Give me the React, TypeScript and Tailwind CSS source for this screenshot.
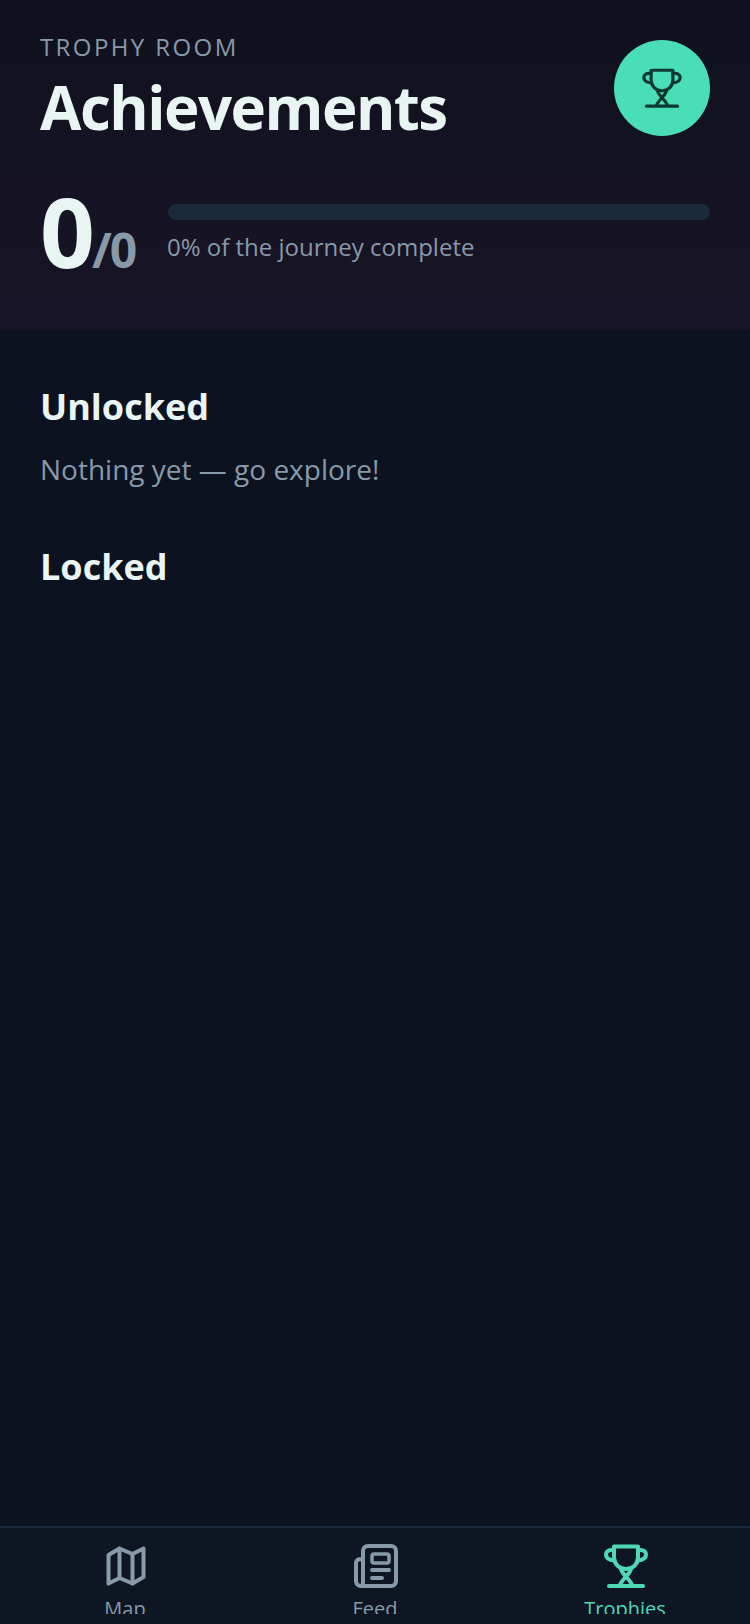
function TrophyIcon({ className, strokeWidth = 4 }: { className?: string; strokeWidth?: number }) {
  return (
    <svg viewBox="0 0 44 44" fill="none" stroke="currentColor" strokeWidth={strokeWidth} strokeLinecap="round" strokeLinejoin="round" className={className}>
      <path d="M10 2.500H34V13C34 20 29 25 22 25C15 25 10 20 10 13Z" />
      <path d="M10 6H7.500C3.500 6 2 8.500 2 10.500C2 13.500 4.500 16 10.500 16.500" />
      <path d="M34 6H36.500C40.500 6 42 8.500 42 10.500C42 13.500 39.500 16 33.500 16.500" />
      <path d="M17 25C18.500 31 26 35 28 41" />
      <path d="M27 25C25.500 31 18 35 16 41" />
      <path d="M5 42H39" />
    </svg>
  );
}

function MapIcon({ className }: { className?: string }) {
  return (
    <svg viewBox="0 0 40 40" fill="none" stroke="currentColor" strokeWidth={4} strokeLinecap="round" strokeLinejoin="round" className={className}>
      <path d="M2.500 9L13.500 2.500L26.500 8L37.500 2.500V31L26.500 37.500L13.500 32L2.500 37.500Z" />
      <path d="M13.500 2.500V32" />
      <path d="M26.500 8V37.500" />
    </svg>
  );
}

function FeedIcon({ className }: { className?: string }) {
  return (
    <svg viewBox="0 0 44 44" fill="none" stroke="currentColor" strokeWidth={4} strokeLinecap="round" strokeLinejoin="round" className={className}>
      <path d="M9 38V7C9 4 11 2 14 2H37C40 2 42 4 42 7V37C42 40 40 42 37 42H7C4 42 2 40 2 37V19C2 16.500 4 15 7 15H9" />
      <path d="M9 38C9 40.500 8 42 7 42" />
      <rect x="18" y="10" width="17" height="9" rx="2" strokeWidth={3.500} />
      <path d="M18 26H35" />
      <path d="M18 34H28" />
    </svg>
  );
}

function NavItem({ icon, label, active }: { icon: React.ReactNode; label: string; active?: boolean }) {
  return (
    <div className={`flex flex-col items-center w-[250px] ${active ? 'text-[#4fd8b4]' : 'text-[#8899aa]'}`}>
      <div className="h-[44px] flex items-center ml-[2px]">{icon}</div>
      <span className="text-[20px] leading-[30px] h-[20px] mt-[6px] overflow-hidden">{label}</span>
    </div>
  );
}

export default function App() {
  return (
    <div className="h-[1624px] w-[750px] flex flex-col overflow-hidden bg-[#0c1220] font-['Open_Sans',sans-serif]">
      <header className="h-[330px] shrink-0 px-10 pt-[30px] bg-gradient-to-b from-[#0f111e] to-[#181427]">
        <div className="flex justify-between items-start">
          <div>
            <p className="text-[24px] leading-[34px] tracking-[2.4px] text-[#8899aa]">TROPHY ROOM</p>
            <h1 className="text-[60px] leading-[74px] mt-[6px] font-bold tracking-[-1.5px] text-[#e8f5f2]">Achievements</h1>
          </div>
          <div className="w-24 h-24 mt-[10px] rounded-full bg-[#4adeb6] flex items-center justify-center">
            <TrophyIcon className="w-10 h-10 text-[#0d3a30]" strokeWidth={3.500} />
          </div>
        </div>
        <div className="flex items-start mt-[31px]">
          <div className="w-[128px] flex items-baseline">
            <span className="text-[96px] leading-[112px] font-bold tracking-[-3px] text-[#e8f5f2]">0</span>
            <span className="text-[48px] leading-[56px] font-bold tracking-[-2px] text-[#8899aa]">/0</span>
          </div>
          <div className="flex-1 pt-[29px]">
            <div className="h-4 rounded-lg bg-[#1a2a3c]" />
            <p className="text-[24px] leading-[34px] mt-[10px] -ml-px text-[#8899aa]">0% of the journey complete</p>
          </div>
        </div>
      </header>
      <main className="flex-1 px-10 pt-[52px]">
        <h2 className="text-[36px] leading-[50px] font-bold text-[#e8f5f2]">Unlocked</h2>
        <p className="text-[28px] leading-[40px] mt-[17px] text-[#8899aa]">Nothing yet — go explore!</p>
        <h2 className="text-[36px] leading-[50px] font-bold text-[#e8f5f2] mt-[53px]">Locked</h2>
      </main>
      <nav className="h-[98px] shrink-0 border-t-2 border-[#1a2a3c] bg-[#0f1623] flex pt-4">
        <NavItem icon={<MapIcon className="w-10 h-10" />} label="Map" />
        <NavItem icon={<FeedIcon className="w-11 h-11" />} label="Feed" />
        <NavItem active icon={<TrophyIcon className="w-11 h-11" />} label="Trophies" />
      </nav>
    </div>
  );
}
